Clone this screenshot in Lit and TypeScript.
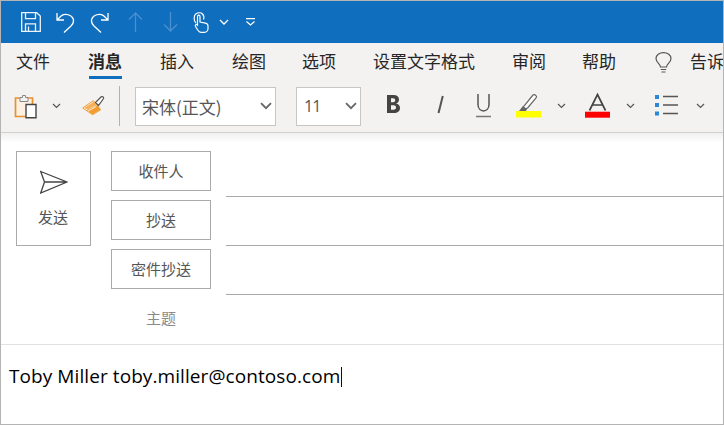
import { css, html, LitElement } from 'lit';
import { customElement } from 'lit/decorators.js';

const tabs = ['文件', '消息', '插入', '绘图', '选项', '设置文字格式', '审阅', '帮助'];

const caret = (name: string) =>
  html`<svg class="caret ${name}" width="9" height="6" viewBox="0 0 9 6"><path d="M1 1l3.500 3.500L8 1" fill="none" stroke="#555" stroke-width="1.200"/></svg>`;
const chevron = html`<svg class="chevron" width="12" height="8" viewBox="0 0 12 8"><path d="M1 1.200l5 5 5-5" fill="none" stroke="#666" stroke-width="1.800"/></svg>`;

@customElement('app-root')
export class AppRoot extends LitElement {
  static styles = css`
    :host {
      display: block;
      width: 724px;
      height: 425px;
      box-sizing: border-box;
      border: 1px solid #b4b4b4;
      overflow: hidden;
      background: #fff;
      font-family: 'Noto Sans CJK SC', 'Noto Sans', sans-serif;
      color: #444;
    }

    .titlebar {
      display: flex;
      align-items: center;
      height: 42px;
      background: #106ebe;
      padding-left: 19px;
    }

    .titlebar svg {
      display: block;
      flex: none;
    }

    .undo { margin-left: 14px; }
    .redo { margin-left: 15px; }
    .up { margin-left: 19px; }
    .down { margin-left: 20px; }
    .touch { margin-left: 15px; }
    .qat-caret { margin-left: 10px; }
    .customize { margin-left: 16px; }

    .ribbon {
      background: #f3f2f1;
      border-bottom: 1px solid #d2d0ce;
    }

    .tabs {
      display: flex;
      gap: 36px;
      height: 37px;
      padding-left: 15px;
      font-size: 17px;
      line-height: 36px;
      color: #262626;
      white-space: nowrap;
    }

    .tab {
      position: relative;
      flex: none;
    }

    .tab:nth-child(-n + 3) { margin-right: 2px; }
    .tab:nth-child(5),
    .tab:nth-child(6) { margin-right: 1px; }

    .tab.active {
      font-weight: 700;
    }

    .tab.active::after {
      content: '';
      position: absolute;
      left: 1px;
      right: 0;
      bottom: 1px;
      height: 3px;
      background: #106ebe;
    }

    .bulb {
      flex: none;
      margin: 9px -18px 0 3px;
    }

    .toolbar {
      display: flex;
      align-items: center;
      height: 52px;
      padding-left: 12px;
    }

    .toolbar svg {
      display: block;
      flex: none;
    }

    .paste-caret { margin-left: 13px; }
    .highlight-caret { margin-left: 16px; }
    .color-caret { margin-left: 16px; }
    .list-caret { margin-left: 18px; }
    .brush { margin-left: 21px; }

    .sep {
      flex: none;
      width: 1px;
      height: 40px;
      margin-left: 13px;
      background: #b3b0ad;
    }

    .select {
      flex: none;
      box-sizing: border-box;
      display: flex;
      align-items: center;
      justify-content: space-between;
      height: 39px;
      background: #fff;
      border: 1px solid #c8c6c4;
      color: #555;
      font-size: 17px;
      padding: 0 3px 0 6px;
    }

    .font { width: 141px; margin-left: 15px; }

    .size {
      width: 65px;
      margin-left: 20px;
      padding-left: 7px;
      font-size: 16px;
      letter-spacing: -1px;
      font-family: 'Open Sans', sans-serif;
    }

    .toolbar .bold { margin: 0 0 4px 25px; }
    .toolbar .italic { margin: 0 0 3px 36px; }
    .underline { margin-left: 32px; }
    .highlight { margin-left: 25px; }
    .color { margin-left: 19px; }
    .list { margin-left: 20px; }

    .compose {
      display: flex;
      padding: 15px 0 0 15px;
      background: linear-gradient(#f0f0f0, #fff 10px) no-repeat top / 100% 12px;
    }

    .send {
      flex: none;
      box-sizing: border-box;
      display: flex;
      flex-direction: column;
      align-items: center;
      width: 75px;
      height: 95px;
      margin-top: 3px;
      padding-top: 17px;
      border: 1px solid #aaa;
      font-size: 15px;
      color: #555;
    }

    .send span {
      margin: 12px 1px 0 0;
      line-height: 22px;
    }

    .fields {
      flex: 1;
      margin-left: 20px;
    }

    .row {
      box-sizing: border-box;
      display: flex;
      height: 49px;
      padding-top: 3px;
      position: relative;
    }

    .row::after {
      content: '';
      position: absolute;
      left: 115px;
      right: 0;
      bottom: 0;
      height: 1px;
      background: #aaa;
    }

    .row.subject::after {
      display: none;
    }

    .to {
      box-sizing: border-box;
      width: 100px;
      height: 40px;
      line-height: 38px;
      border: 1px solid #aaa;
      text-align: center;
      font-size: 15px;
      color: #555;
    }

    .row.subject .to {
      border-color: transparent;
      color: #8a8a8a;
    }

    .body {
      border-top: 1px solid #e1e1e1;
      padding: 19px 0 0 8px;
      font-family: 'Open Sans', sans-serif;
      font-size: 19px;
      line-height: 25px;
      letter-spacing: 0.08px;
      color: #000;
      white-space: nowrap;
    }

    .cursor {
      display: inline-block;
      width: 1px;
      height: 20px;
      margin-left: 1px;
      vertical-align: -4px;
      background: #111;
    }
  `;

  render() {
    return html`
      <div class="titlebar">
        <svg width="22" height="20" viewBox="0 0 22 20" fill="none" stroke="#fff" stroke-width="1.300" opacity="0.92"><path d="M1.700.7h15l3.600 3.400v15.200H1.700zM5.500.7v6h10v-6M5.500 19.300v-7.500h10v7.500M8.500 14.500v4.800"/></svg>
        <svg class="undo" width="19" height="21" viewBox="0 0 19 21" fill="none" stroke="#fff" stroke-width="1.300"><path d="M1 1v7h7M1.200 7.800L5.600 3.600c3.600-2.600 10.200-.8 11.600 3.400 1 3-.6 5.400-2.200 7L8 20.500"/></svg>
        <svg class="redo" width="19" height="21" viewBox="0 0 19 21" fill="none" stroke="#fff" stroke-width="1.300"><path d="M18 1v7h-7M17.800 7.800L13.400 3.600C9.800 1 3.200 2.800 1.800 7c-1 3 .6 5.400 2.200 7l7 6.500"/></svg>
        <svg class="up" width="15" height="20" viewBox="0 0 15 20" fill="none" stroke="#4a8fd0" stroke-width="1.300"><path d="M7.500 20V1M1 7.500L7.500 1 14 7.500"/></svg>
        <svg class="down" width="15" height="20" viewBox="0 0 15 20" fill="none" stroke="#4a8fd0" stroke-width="1.300"><path d="M7.500 0v19M1 12.500L7.500 19 14 12.500"/></svg>
        <svg class="touch" width="16" height="21" viewBox="0 0 16 21" fill="none" stroke="#fff" stroke-width="1.200"><path d="M3 11C.5 9 .5 3.500 3 1.800 5 .5 8 .5 9.500 2c1.500 1.500 1.500 4 1 5.500"/><path d="M4.500 13V4.500c0-1.800 2.500-1.800 2.500 0V10l5.500 1.200c1.500.4 2.500 1.300 2.500 2.800v2.500c0 2-1.500 3.800-3.500 3.800H8c-1.500 0-2.500-1-3.300-2.300L2.500 14.500c-.8-1.500 1-2.700 2-1.500z"/></svg>
        <svg class="qat-caret" width="10" height="6" viewBox="0 0 10 6" fill="none" stroke="#fff" stroke-width="1.300"><path d="M1 1l4 4 4-4"/></svg>
        <svg class="customize" width="11" height="8" viewBox="0 0 11 8" fill="none" stroke="#fff" stroke-width="1.200"><path d="M1 .7h9M1.500 3.500l4 3.500 4-3.500"/></svg>
      </div>

      <div class="ribbon">
        <div class="tabs">
          ${tabs.map(
            (tab) => html`<div class="tab ${tab === '消息' ? 'active' : ''}">${tab}</div>`,
          )}
          <svg class="bulb" width="17" height="22" viewBox="0 0 17 22" fill="none" stroke="#555" stroke-width="1.200"><path d="M5.500 15c0-3-4.500-4.500-4.500-8.500C1 3 4.500.7 8.500.7S16 3 16 6.500c0 4-4.500 5.500-4.500 8.500zM5.800 17.500h5.400M6.500 20h4"/></svg>
          <div class="tab">告诉</div>
        </div>

        <div class="toolbar">
          <svg width="26" height="25" viewBox="0 0 26 25"><path d="M2.500 4h17v18.500h-17z" fill="#fdf1e3" stroke="#e8912d" stroke-width="1.700"/><path d="M7 7.500V3.500h2.500V1.500h3V3.500H15v4z" fill="#f3f2f1" stroke="#888"/><path d="M13 10.500h10v13.300H13z" fill="#fff" stroke="#444" stroke-width="1.400"/></svg>
          ${caret('paste-caret')}
          <svg class="brush" width="24" height="20" viewBox="0 0 24 20"><path d="M.7 12L11.300 4.700l7.400 9L10.700 18.700z" fill="#fff" stroke="#ef9a33" stroke-width="1"/><path d="M2 12l10-6.500 3 3.700L5.500 13.500z" fill="#f7b05a"/><path d="M4.500 14l11-4.500 3 4-8 5z" fill="#f39c32"/><path d="M6 15l7.500-4" stroke="#fff" stroke-width="0.800"/><path d="M13.500 6.500L19 1c1-1 3-.2 2.500 1.500L16.500 9.500z" fill="#fff" stroke="#555" stroke-width="1.200"/></svg>
          <div class="sep"></div>
          <div class="select font"><span>宋体(正文)</span>${chevron}</div>
          <div class="select size"><span>11</span>${chevron}</div>
          <svg class="bold" width="15" height="20" viewBox="0 0 15 20"><path d="M1 1h6.500c3.500 0 5.500 1.500 5.500 4.500 0 2-1 3.500-3 4 2.500.4 4 2 4 4.500 0 3.500-2.500 5-6 5H1zM5 4.300v4h2c1.500 0 2.200-.8 2.200-2s-.7-2-2.200-2zM5 11.300v4.400h2.500c1.700 0 2.500-.8 2.500-2.200s-.8-2.200-2.500-2.200z" fill="#444" fill-rule="evenodd"/></svg>
          <svg class="italic" width="7" height="19" viewBox="0 0 7 19"><path d="M5.800 1L1.500 18" stroke="#555" stroke-width="2"/></svg>
          <svg class="underline" width="15" height="24" viewBox="0 0 15 24" fill="none" stroke="#555" stroke-width="1.500"><path d="M2 0v10.500c0 8.500 11 8.500 11 0V0"/><path d="M0 22.500h15" stroke="#777"/></svg>
          <svg class="highlight" width="25" height="26" viewBox="0 0 25 26"><path d="M5 17l3-4 9-11c1.500-1.400 4.500 1 3.200 2.700L12 14.500 8.500 17z" fill="#fff" stroke="#666" stroke-width="1.200"/><path d="M3 18l4-5 4 3-1 2z" fill="#666"/><path d="M0 18h25v6.500H0z" fill="#ffff00"/></svg>
          ${caret('highlight-caret')}
          <svg class="color" width="25" height="26" viewBox="0 0 25 26"><path d="M4.500 17.500L12.500 1.500l8 16M7 12h11" fill="none" stroke="#444" stroke-width="1.700"/><path d="M0 18.700h25v6H0z" fill="#f00"/></svg>
          ${caret('color-caret')}
          <svg class="list" width="23" height="22" viewBox="0 0 23 22"><path d="M0 0h4v4H0zM0 8h4v4H0zM0 16.500h4v4H0z" fill="#2b88d8"/><path d="M8 1.500h15M8 10h15M8 18.500h15" stroke="#555" stroke-width="1.300"/></svg>
          ${caret('list-caret')}
        </div>
      </div>

      <div class="compose">
        <div class="send">
          <svg width="28" height="25" viewBox="0 0 28 25" fill="none" stroke="#444" stroke-width="1.300"><path d="M.7 2.500L27 13 .7 24 4.500 13zM4.500 13H27"/></svg>
          <span>发送</span>
        </div>
        <div class="fields">
          <div class="row"><div class="to">收件人</div></div>
          <div class="row"><div class="to">抄送</div></div>
          <div class="row"><div class="to">密件抄送</div></div>
          <div class="row subject"><div class="to">主题</div></div>
        </div>
      </div>

      <div class="body">Toby Miller toby.miller@contoso.com<span class="cursor"></span></div>
    `;
  }
}
